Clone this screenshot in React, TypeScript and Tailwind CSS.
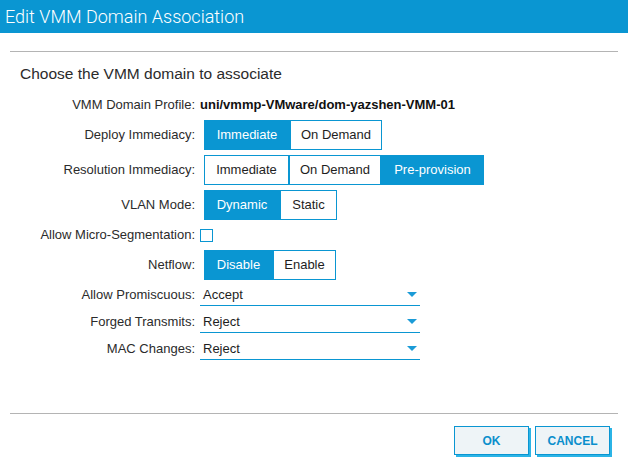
const BLUE = 'border-[#0a96d2]'

type Opt = { label: string; w: string }

const SEGMENTS: { label: string; opts: Opt[]; selected: number }[] = [
  {
    label: 'Deploy Immediacy:',
    opts: [
      { label: 'Immediate', w: 'w-[86px]' },
      { label: 'On Demand', w: 'w-[92px]' },
    ],
    selected: 0,
  },
  {
    label: 'Resolution Immediacy:',
    opts: [
      { label: 'Immediate', w: 'w-[85px]' },
      { label: 'On Demand', w: 'w-[92px]' },
      { label: 'Pre-provision', w: 'w-[103px]' },
    ],
    selected: 2,
  },
  {
    label: 'VLAN Mode:',
    opts: [
      { label: 'Dynamic', w: 'w-[76px]' },
      { label: 'Static', w: 'w-[57px]' },
    ],
    selected: 0,
  },
]

const SELECTS = [
  { label: 'Allow Promiscuous:', value: 'Accept' },
  { label: 'Forged Transmits:', value: 'Reject' },
  { label: 'MAC Changes:', value: 'Reject' },
]

function Label({ children }: { children: React.ReactNode }) {
  return (
    <div className="w-[190px] shrink-0 text-right pr-[5px] text-[13px] text-[#2b2b2b]">
      {children}
    </div>
  )
}

function Segmented({ opts, selected }: { opts: Opt[]; selected: number }) {
  return (
    <div className="ml-[4px] flex h-[30px]">
      {opts.map((o, i) => (
        <div
          key={o.label}
          className={
            'flex items-center justify-center border text-[13px] ' +
            BLUE +
            ' ' +
            o.w +
            (i === selected ? ' bg-[#0a96d2] text-white' : ' bg-white text-[#1e1e1e]')
          }
        >
          {o.label}
        </div>
      ))}
    </div>
  )
}

function Select({ value }: { value: string }) {
  return (
    <div className="flex h-[22px] w-[220px] items-center justify-between border-b border-[#0a96d2] pl-[3px] pr-[3px] text-[13px] text-[#1e1e1e]">
      <span>{value}</span>
      <svg width="10" height="5" viewBox="0 0 10 5">
        <polygon points="0,0 10,0 5,5" fill="#1b9bd7" />
      </svg>
    </div>
  )
}

export default function App() {
  return (
    <div className="h-[469px] w-[628px] bg-white font-['Liberation_Sans',Arial,sans-serif] text-[#2b2b2b]">
      <div className="flex h-[33px] items-center bg-[#0a96d2] pl-[5px]">
        <h1 className="font-['Roboto',sans-serif] text-[18px] font-light text-white">
          Edit VMM Domain Association
        </h1>
      </div>

      <div className="px-[10px]">
        <div className="mt-[18px] border-t border-[#b4b4b4]" />
        <h2 className="mt-[12px] pl-[10px] text-[15.5px] leading-[20px] text-[#2b2b2b]">
          Choose the VMM domain to associate
        </h2>

        <div className="mt-[11px] flex flex-col gap-[5px]">
          <div className="flex h-[20px] items-center">
            <Label>VMM Domain Profile:</Label>
            <span className="text-[13px] font-bold text-[#111]">
              uni/vmmp-VMware/dom-yazshen-VMM-01
            </span>
          </div>

          {SEGMENTS.map((s) => (
            <div key={s.label} className="flex items-center">
              <Label>{s.label}</Label>
              <Segmented opts={s.opts} selected={s.selected} />
            </div>
          ))}

          <div className="flex h-[20px] items-center">
            <Label>Allow Micro-Segmentation:</Label>
            <div className="h-[13px] w-[13px] border border-[#0a96d2] bg-white" />
          </div>

          <div className="flex items-center">
            <Label>Netflow:</Label>
            <Segmented
              opts={[
                { label: 'Disable', w: 'w-[69px]' },
                { label: 'Enable', w: 'w-[63px]' },
              ]}
              selected={0}
            />
          </div>

          {SELECTS.map((s, i) => (
            <div key={s.label} className={'flex items-center' + (i === 0 ? ' -mt-[1px]' : '')}>
              <Label>{s.label}</Label>
              <Select value={s.value} />
            </div>
          ))}
        </div>

        <div className="mt-[53px] border-t border-[#b4b4b4]" />

        <div className="mt-[12px] flex justify-end gap-[6px] pr-[8px]">
          {['OK', 'CANCEL'].map((b) => (
            <button
              key={b}
              className="flex h-[29px] w-[75px] items-center justify-center border border-[#0a96d2] bg-[#eef4f7] text-[12px] font-bold text-[#0a8fcc] shadow-[2px_2px_0_#2bb4e6]"
            >
              {b}
            </button>
          ))}
        </div>
      </div>
    </div>
  )
}
